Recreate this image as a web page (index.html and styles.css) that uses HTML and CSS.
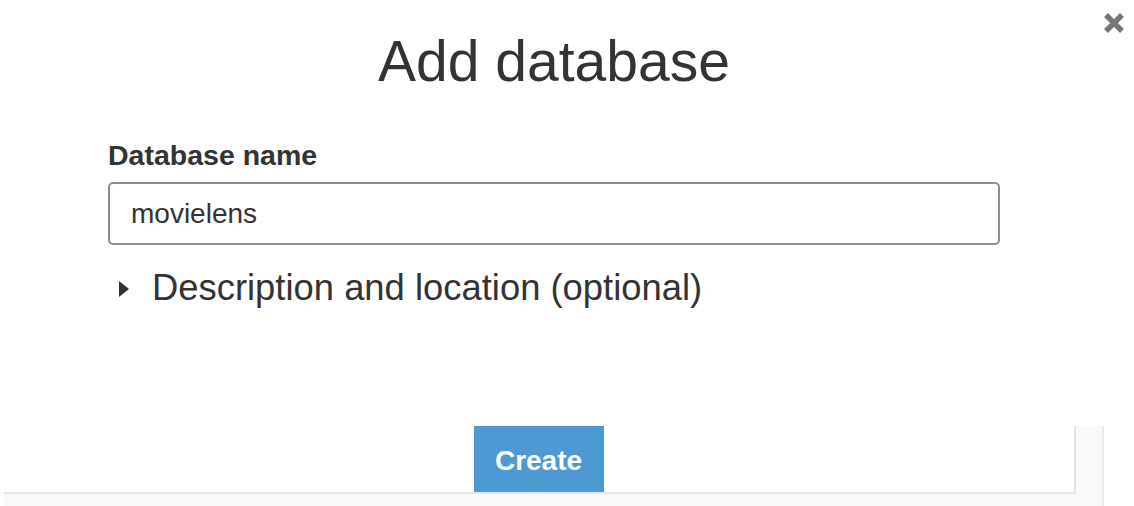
FILE: index.html
```html
<!DOCTYPE html>
<html lang="en">
<head>
<meta charset="utf-8">
<title>Add database</title>
<link rel="stylesheet" href="styles.css">
</head>
<body>
<div class="page">
  <button class="close" aria-label="Close">
    <svg width="22" height="22" viewBox="0 0 22 22"><path d="M3 3 L19 19 M19 3 L3 19" stroke="#777" stroke-width="5.5" stroke-linecap="butt" fill="none"/></svg>
  </button>
  <div class="modal">
    <h1 class="title">Add database</h1>
    <label class="label" for="dbname">Database name</label>
    <input class="input" id="dbname" type="text" value="movielens">
    <div class="expander">
      <span class="caret"></span>
      <span class="expander-text">Description and location (optional)</span>
    </div>
  </div>
  <div class="footer">
    <div class="footer-inner">
      <button class="create">Create</button>
    </div>
  </div>
</div>
</body>
</html>
```

FILE: styles.css
```css
html, body {
  margin: 0;
  padding: 0;
  background: #ffffff;
}
body {
  font-family: "Liberation Sans", Arial, sans-serif;
  color: #333333;
  overflow: hidden;
}
.page {
  position: relative;
  width: 1134px;
  height: 506px;
  padding-top: 28px;
  box-sizing: border-box;
}
.close {
  position: absolute;
  top: 12px;
  left: 1103px;
  width: 22px;
  height: 22px;
  padding: 0;
  border: 0;
  background: transparent;
  display: block;
}
.close svg { display: block; }
.modal {
  width: 892px;
  margin-left: 108px;
  display: flex;
  flex-direction: column;
}
.title {
  margin: 0;
  font-size: 57px;
  line-height: 66px;
  font-weight: normal;
  text-align: center;
  color: #333333;
}
.label {
  margin-top: 45px;
  font-size: 28.5px;
  line-height: 32px;
  font-weight: bold;
  color: #333333;
}
.input {
  margin-top: 11px;
  width: 892px;
  height: 63px;
  box-sizing: border-box;
  border: 2px solid #8b8e92;
  border-radius: 5px;
  padding: 0 20px 0 21px;
  font-family: "Liberation Sans", Arial, sans-serif;
  font-size: 28px;
  color: #333333;
  outline: none;
}
.expander {
  margin-top: 22px;
  display: flex;
  align-items: center;
  height: 42px;
}
.caret {
  width: 0;
  height: 0;
  margin-left: 11px;
  margin-top: 1px;
  border-top: 8px solid transparent;
  border-bottom: 8px solid transparent;
  border-left: 10px solid #333333;
}
.expander-text {
  margin-left: 23px;
  font-size: 36.4px;
  line-height: 42px;
  color: #333333;
}
.footer {
  margin-top: 117px;
  margin-left: 4px;
  width: 1098px;
  height: 80px;
  background: #f9f9f9;
  border-right: 2px solid #ebebeb;
}
.footer-inner {
  width: 1070px;
  height: 66px;
  background: #ffffff;
  border-right: 2px solid #e4e4e4;
  border-bottom: 2px solid #e4e4e4;
  display: flex;
  justify-content: center;
}
.create {
  width: 130px;
  height: 66px;
  margin-right: 1px;
  border: 0;
  background: #4d99d3;
  color: #ffffff;
  font-family: "Liberation Sans", Arial, sans-serif;
  font-size: 28px;
  font-weight: bold;
  padding: 3px 0 0;
}
```
